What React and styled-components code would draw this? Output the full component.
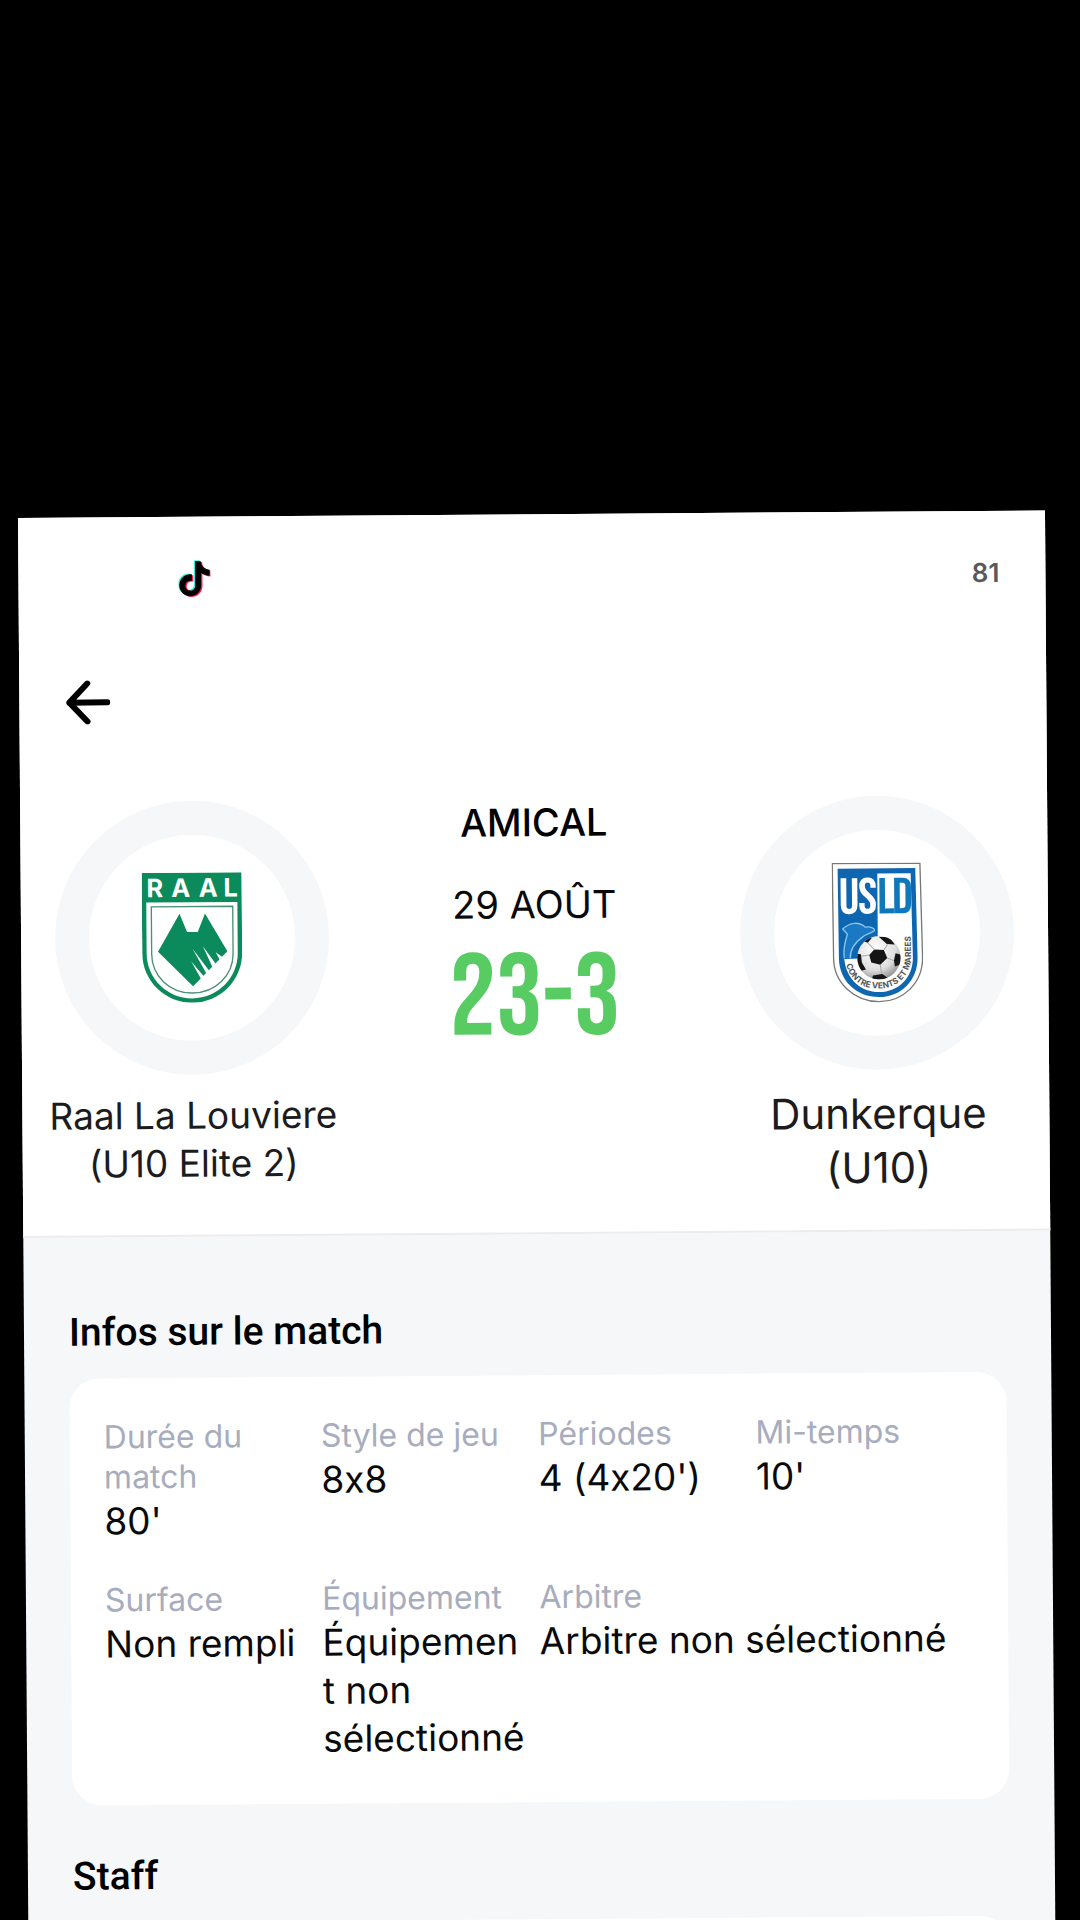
import React from "react";
import styled, { createGlobalStyle } from "styled-components";

const CONDENSED = '"Bebas Neue", "Oswald", "Roboto Condensed", "Liberation Sans Narrow", "DejaVu Sans Condensed", sans-serif';

const GlobalStyle = createGlobalStyle`
  *, *::before, *::after { box-sizing: border-box; }
  body {
    margin: 0;
    background: #000;
    color: #0a0a0a;
    font-family: Inter, Roboto, "Liberation Sans", sans-serif;
    font-variant-ligatures: no-contextual;
  }
`;

const Page = styled.div`
  height: 100vh;
  overflow: hidden;
  padding: 518px 35px 0 18px;
`;

const Phone = styled.main`
  background: #f6f7f9;
  min-height: 100vh;
  transform: rotate(-0.42deg);
  transform-origin: 0 0;
`;

const Header = styled.header`
  background: #fff;
  border-bottom: 2px solid #ececee;
`;

const StatusBar = styled.div`
  display: flex;
  align-items: center;
  justify-content: space-between;
  height: 124px;
  padding: 0 46px 0 160px;
`;

const Battery = styled.span`
  color: #595959;
  font-size: 26px;
  font-weight: 600;
  line-height: 32px;
`;

const Nav = styled.nav`
  display: flex;
  align-items: center;
  height: 122px;
  padding: 0 46px;
`;

const BackButton = styled.button`
  display: flex;
  padding: 0;
  border: 0;
  background: none;
  color: #000;
  cursor: pointer;
`;

const Scoreboard = styled.section`
  display: flex;
  align-items: flex-start;
  padding: 38px 26px 35px;
`;

const Team = styled.div`
  display: flex;
  flex: none;
  flex-direction: column;
  align-items: center;
  gap: 17px;
  width: 290px;
`;

const CrestRing = styled.div`
  display: flex;
  align-items: center;
  justify-content: center;
  width: 274px;
  height: 274px;
  border: 34px solid #f6f7f9;
  border-radius: 50%;
`;

const TeamName = styled.h2`
  margin: 0;
  color: #1c1c1e;
  font-size: ${(p) => (p.$large ? 42 : 37)}px;
  font-weight: 400;
  line-height: ${(p) => (p.$large ? 54 : 48)}px;
  text-align: center;
  white-space: nowrap;
`;

const Result = styled.div`
  display: flex;
  flex: 1;
  flex-direction: column;
  align-items: center;
`;

const Kind = styled.h1`
  margin: 0 0 34px;
  color: #000;
  font-size: 38px;
  font-weight: 500;
  line-height: 48px;
`;

const MatchDate = styled.time`
  color: #0a0a0a;
  font-size: 38px;
  line-height: 48px;
`;

const Score = styled.strong`
  margin-top: 24px;
  color: #58cb63;
  font-family: ${CONDENSED};
  font-size: 116px;
  font-weight: 400;
  line-height: 96px;
`;

const Content = styled.div`
  padding: 71px 45px 0;
`;

const Section = styled.section`
  margin-bottom: 47px;
`;

const SectionTitle = styled.h2`
  margin: 0 0 22px;
  color: #000;
  font-family: Roboto, Inter, "Liberation Sans", sans-serif;
  font-size: 39px;
  font-weight: 500;
  line-height: 48px;
`;

const Card = styled.div`
  min-height: 240px;
  padding: 39px 34px 41px;
  border-radius: 30px;
  background: #fff;
`;

const InfoGrid = styled.dl`
  display: grid;
  grid-template-columns: repeat(4, minmax(0, 1fr));
  row-gap: 35px;
  margin: 0;
`;

const InfoItem = styled.div`
  grid-column: span ${(p) => p.$span || 1};
  padding-right: 12px;
`;

const InfoLabel = styled.dt`
  color: #a7adbd;
  font-size: 32px;
  line-height: 40px;
`;

const InfoValue = styled.dd`
  margin: 0;
  font-size: 37px;
  line-height: 48px;
  overflow-wrap: break-word;
`;

const TIKTOK_NOTE =
  "M12.525.02c1.31-.02 2.61-.01 3.91-.02.08 1.53.63 3.09 1.75 4.17 1.12 1.11 2.7 1.62 4.24 1.79v4.03c-1.44-.05-2.89-.35-4.2-.97-.57-.26-1.1-.59-1.62-.93-.01 2.92.01 5.84-.02 8.75-.08 1.4-.54 2.79-1.35 3.94-1.31 1.92-3.58 3.17-5.91 3.21-1.43.08-2.86-.31-4.08-1.03-2.02-1.19-3.44-3.37-3.65-5.71-.02-.5-.03-1-.01-1.49.18-1.9 1.12-3.72 2.58-4.96 1.66-1.44 3.98-2.13 6.15-1.72.02 1.48-.04 2.96-.04 4.44-.99-.32-2.15-.23-3.02.37-.63.41-1.11 1.04-1.36 1.75-.21.51-.15 1.07-.14 1.61.24 1.64 1.82 3.02 3.5 2.87 1.12-.01 2.19-.66 2.77-1.61.19-.33.4-.67.41-1.06.1-1.79.06-3.57.07-5.36.01-4.03-.01-8.05.02-12.07z";

function TikTokLogo() {
  return (
    <svg width="32" height="38" viewBox="1 -1 22 26" role="img" aria-label="TikTok">
      <path d={TIKTOK_NOTE} fill="#3fe6dc" transform="translate(-0.9 -0.6)" />
      <path d={TIKTOK_NOTE} fill="#f5204f" transform="translate(0.9 0.6)" />
      <path d={TIKTOK_NOTE} fill="#000" />
    </svg>
  );
}

function BackArrow() {
  return (
    <svg width="45" height="44" viewBox="0 0 45 44" fill="none" stroke="currentColor" strokeWidth="6" strokeLinecap="round" strokeLinejoin="round" aria-hidden="true">
      <path d="M22 3 4 22l18 19M4 22h38" />
    </svg>
  );
}

function RaalCrest() {
  return (
    <svg width="100" height="130" viewBox="37 40 298 388" role="img" aria-label="RAAL">
      <path d="M37 40H335V280C335 362 268 428 186 428S37 362 37 280Z" fill="#0b8a5b" />
      <path d="M50 128H322V280C322 355 261 415 186 415S50 355 50 280Z" fill="#fff" />
      <path d="M65 141H308V282C308 348 254 399 186 399S65 348 65 282Z" fill="#fff" stroke="#4c8f76" strokeWidth="4" />
      <path d="M149 162 171 217H203L225 162 291 275 188 379 84 275Z" fill="#0b8a5b" />
      <path d="M187 267 237 334 228 341ZM218 260 256 312 246 322ZM256 278 276 292 268 300ZM183 305 220 349 212 357Z" fill="#fff" />
      <g fill="#fff" fontFamily="Inter, sans-serif" fontWeight="700" fontSize="76" textAnchor="middle">
        <text x="76" y="112">R</text>
        <text x="153" y="112">A</text>
        <text x="235" y="112">A</text>
        <text x="302" y="112">L</text>
      </g>
    </svg>
  );
}

function UsldCrest() {
  return (
    <svg width="91" height="140" viewBox="50 40 273 420" role="img" aria-label="USLD">
      <defs>
        <radialGradient id="ball" cx="0.4" cy="0.3" r="0.75">
          <stop offset="0" stopColor="#fff" />
          <stop offset="0.65" stopColor="#dedede" />
          <stop offset="1" stopColor="#8c8c8c" />
        </radialGradient>
        <clipPath id="ball-edge"><circle cx="190" cy="325" r="65" /></clipPath>
        <path id="motto" d="M91 345Q112 417 188 417T286 340V215" />
      </defs>
      <path d="M52 42H315L321 325C321 402 262 457 190 457S54 402 54 325Z" fill="#fff" stroke="#777" strokeWidth="4" />
      <path d="M68 57H301L306 325C306 394 257 443 190 443S70 394 70 325Z" fill="#0f66b0" />
      <path d="M187 72H287L292 325C292 386 248 428 190 428 138 428 92 392 86 328L187 326Z" fill="#fff" />
      <path d="M86 326C82 296 90 272 96 254L82 238C105 216 132 217 150 233 166 230 180 238 177 244 164 253 150 255 145 260 122 276 103 298 104 326" fill="#1a79c2" stroke="#86c5ee" strokeWidth="4" strokeLinejoin="round" />
      <g fontFamily={CONDENSED} fontSize="152" textAnchor="middle">
        <text x="102" y="192" fill="#fff">U</text>
        <text x="157" y="192" fill="#fff">S</text>
        <text x="213" y="192" fill="#0f78bd">L</text>
        <text x="262" y="192" fill="#0f78bd">D</text>
      </g>
      <circle cx="190" cy="325" r="65" fill="url(#ball)" />
      <g clipPath="url(#ball-edge)">
        <path d="m176 300 29 2 10 24-21 20-27-7-6-22ZM190 262l32 2 16 22-24-2ZM240 312l16 5v28l-18 7-3-18ZM172 378l28-4 16 12-20 10-28-6ZM122 312l14 2 3 26 12 20-14 4-20-24ZM145 275l16-13 8 4-12 14Z" fill="#151515" />
        <path d="m176 300-19-20M205 302l12-18M215 326l20 8M194 346l4 28M161 317l-24 3" stroke="#aaa" strokeWidth="3" />
      </g>
      <text fill="#555" fontFamily="Inter, sans-serif" fontWeight="700" fontSize="25">
        <textPath href="#motto">CONTRE VENTS ET MAREES</textPath>
      </text>
    </svg>
  );
}

const INFOS = [
  { label: "Durée du match", value: "80'" },
  { label: "Style de jeu", value: "8x8" },
  { label: "Périodes", value: "4 (4x20')" },
  { label: "Mi-temps", value: "10'" },
  { label: "Surface", value: "Non rempli" },
  { label: "Équipement", value: "Équipement non sélectionné" },
  { label: "Arbitre", value: "Arbitre non sélectionné", span: 2 },
];

export default function App() {
  return (
    <>
      <GlobalStyle />
      <Page>
        <Phone>
          <Header>
            <StatusBar>
              <TikTokLogo />
              <Battery>81</Battery>
            </StatusBar>
            <Nav>
              <BackButton type="button" aria-label="Retour">
                <BackArrow />
              </BackButton>
            </Nav>
            <Scoreboard>
              <Team>
                <CrestRing><RaalCrest /></CrestRing>
                <TeamName>Raal La Louviere<br />(U10 Elite 2)</TeamName>
              </Team>
              <Result>
                <Kind>AMICAL</Kind>
                <MatchDate dateTime="08-29">29 AOÛT</MatchDate>
                <Score>23-3</Score>
              </Result>
              <Team>
                <CrestRing><UsldCrest /></CrestRing>
                <TeamName $large>Dunkerque<br />(U10)</TeamName>
              </Team>
            </Scoreboard>
          </Header>
          <Content>
            <Section>
              <SectionTitle>Infos sur le match</SectionTitle>
              <Card>
                <InfoGrid>
                  {INFOS.map(({ label, value, span }) => (
                    <InfoItem key={label} $span={span}>
                      <InfoLabel>{label}</InfoLabel>
                      <InfoValue>{value}</InfoValue>
                    </InfoItem>
                  ))}
                </InfoGrid>
              </Card>
            </Section>
            <Section>
              <SectionTitle>Staff</SectionTitle>
              <Card />
            </Section>
          </Content>
        </Phone>
      </Page>
    </>
  );
}
